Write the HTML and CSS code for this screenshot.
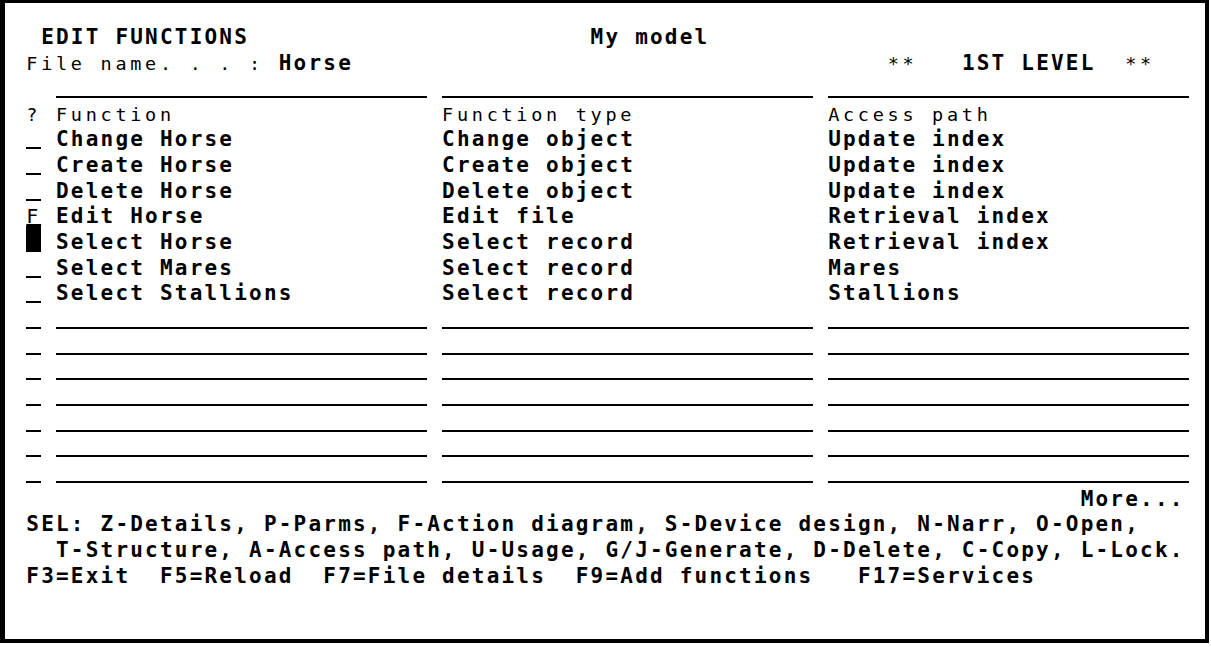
FILE: index.html
```html
<!DOCTYPE html>
<html lang="en">
<head>
    <meta charset="UTF-8" />
    <meta name="viewport" content="width=device-width, initial-scale=1.0" />
    <title>Edit Functions</title>
    <link rel="stylesheet" href="styles.css">
</head>
<body>
    <div class="screen">
        <div class="row hi"> EDIT FUNCTIONS                       My model</div>
        <div class="row"><span class="lo">File name. . . : </span><span class="hi">Horse</span>                                    <span class="lo">**   </span><span class="hi">1ST LEVEL</span><span class="lo">  **</span></div>

        <div class="list">
            <div class="list-row">
                <div></div>
                <div><span class="fld w25"></span></div>
                <div><span class="fld w25"></span></div>
                <div><span class="fld w24"></span></div>
            </div>
            <div class="list-row lo">
                <div>?</div>
                <div>Function</div>
                <div>Function type</div>
                <div>Access path</div>
            </div>
            <div class="list-row hi">
                <div><span class="fld w1"></span></div>
                <div>Change Horse</div>
                <div>Change object</div>
                <div>Update index</div>
            </div>
            <div class="list-row hi">
                <div><span class="fld w1"></span></div>
                <div>Create Horse</div>
                <div>Create object</div>
                <div>Update index</div>
            </div>
            <div class="list-row hi">
                <div><span class="fld w1"></span></div>
                <div>Delete Horse</div>
                <div>Delete object</div>
                <div>Update index</div>
            </div>
            <div class="list-row hi">
                <div><span class="fld-val">F</span></div>
                <div>Edit Horse</div>
                <div>Edit file</div>
                <div>Retrieval index</div>
            </div>
            <div class="list-row hi">
                <div><span class="cursor"></span></div>
                <div>Select Horse</div>
                <div>Select record</div>
                <div>Retrieval index</div>
            </div>
            <div class="list-row hi">
                <div><span class="fld w1"></span></div>
                <div>Select Mares</div>
                <div>Select record</div>
                <div>Mares</div>
            </div>
            <div class="list-row hi">
                <div><span class="fld w1"></span></div>
                <div>Select Stallions</div>
                <div>Select record</div>
                <div>Stallions</div>
            </div>
            <div class="list-row">
                <div><span class="fld w1"></span></div>
                <div><span class="fld w25"></span></div>
                <div><span class="fld w25"></span></div>
                <div><span class="fld w24"></span></div>
            </div>
            <div class="list-row">
                <div><span class="fld w1"></span></div>
                <div><span class="fld w25"></span></div>
                <div><span class="fld w25"></span></div>
                <div><span class="fld w24"></span></div>
            </div>
            <div class="list-row">
                <div><span class="fld w1"></span></div>
                <div><span class="fld w25"></span></div>
                <div><span class="fld w25"></span></div>
                <div><span class="fld w24"></span></div>
            </div>
            <div class="list-row">
                <div><span class="fld w1"></span></div>
                <div><span class="fld w25"></span></div>
                <div><span class="fld w25"></span></div>
                <div><span class="fld w24"></span></div>
            </div>
            <div class="list-row">
                <div><span class="fld w1"></span></div>
                <div><span class="fld w25"></span></div>
                <div><span class="fld w25"></span></div>
                <div><span class="fld w24"></span></div>
            </div>
            <div class="list-row">
                <div><span class="fld w1"></span></div>
                <div><span class="fld w25"></span></div>
                <div><span class="fld w25"></span></div>
                <div><span class="fld w24"></span></div>
            </div>
            <div class="list-row">
                <div><span class="fld w1"></span></div>
                <div><span class="fld w25"></span></div>
                <div><span class="fld w25"></span></div>
                <div><span class="fld w24"></span></div>
            </div>
        </div>

        <div class="row hi more">More...</div>
        <div class="row hi">SEL: Z-Details, P-Parms, F-Action diagram, S-Device design, N-Narr, O-Open,</div>
        <div class="row hi">  T-Structure, A-Access path, U-Usage, G/J-Generate, D-Delete, C-Copy, L-Lock.</div>
        <div class="row hi">F3=Exit  F5=Reload  F7=File details  F9=Add functions   F17=Services</div>
    </div>
</body>
</html>
```

FILE: styles.css
```css
:root {
    --cw: 14.85px;
    --rh: 25.67px;
}
body {
    margin: 0;
    background: #ffffff;
}
.screen {
    box-sizing: border-box;
    width: 1209px;
    height: 643px;
    padding: 21.85px 0 0 21.3px;
    border: 4px solid #000;
    border-left-width: 5px;
    border-top-width: 3px;
    background: #ffffff;
    color: #000;
    font-family: "DejaVu Sans Mono", monospace;
    font-size: 20px;
    line-height: var(--rh);
    letter-spacing: calc(var(--cw) - 0.60205em);
}
.row {
    height: var(--rh);
    white-space: pre;
}
.hi {
    font-weight: bold;
    font-size: 21px;
    letter-spacing: calc(var(--cw) - 0.60205em);
}
.lo {
    font-weight: normal;
    font-size: 18.5px;
    letter-spacing: calc(var(--cw) - 0.60205em);
}
.more {
    padding-left: calc(var(--cw) * 71);
}
.list-row {
    display: grid;
    grid-template-columns: calc(var(--cw) * 2) calc(var(--cw) * 26) calc(var(--cw) * 26) 1fr;
    height: var(--rh);
    white-space: pre;
}
/* input fields: underlined cells */
.fld {
    display: inline-block;
    height: 2px;
    background: #000;
    vertical-align: -3px;
}
.w1 {
    width: var(--cw);
}
.w24 {
    width: calc(var(--cw) * 24.3);
}
.w25 {
    width: calc(var(--cw) * 25);
}
.fld-val {
    font-weight: normal;
    font-size: 20px;
    letter-spacing: calc(var(--cw) - 0.60205em);
    text-decoration: underline;
    text-decoration-thickness: 2px;
    text-underline-offset: 1px;
    text-decoration-skip-ink: none;
}
.cursor {
    display: inline-block;
    width: var(--cw);
    height: var(--rh);
    margin-top: -4.25px;
    vertical-align: top;
    background: #000;
}
```
